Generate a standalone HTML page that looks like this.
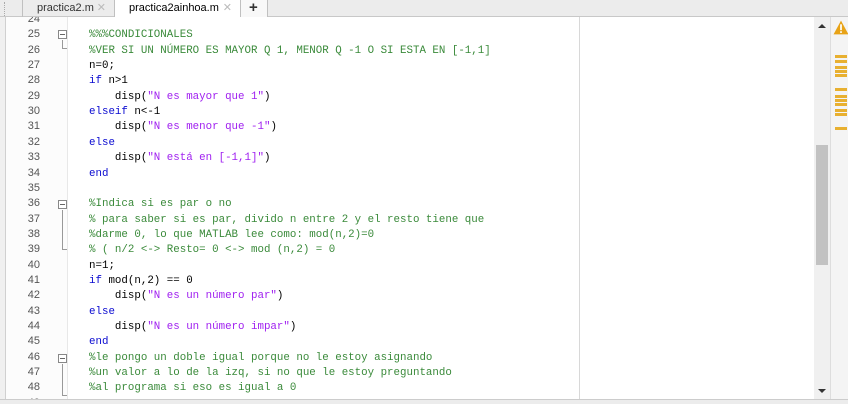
<!DOCTYPE html>
<html><head><meta charset="utf-8"><style>
*{margin:0;padding:0;box-sizing:border-box}
body{width:848px;height:404px;overflow:hidden;background:#f0f0f0;font-family:"Liberation Sans",sans-serif;position:relative}
.tabbar{position:absolute;left:0;top:0;width:848px;height:17px;background:#ececec;border-bottom:1px solid #c8c8c8}
.tab{position:absolute;top:0;height:17px;font-size:11px;line-height:16px;color:#333;padding-left:14px;border-right:1px solid #c0c0c0}
.tab .x{position:absolute;right:8px;color:#bbb;font-size:11px}
.ed{position:absolute;left:5px;top:17px;width:809px;height:382px;background:#fff;border-left:1px solid #d0d0d0;overflow:hidden}
.gut{position:absolute;left:0;top:0;width:62px;height:382px;background:#fcfcfc;border-right:1px solid #e8e8e8}
.ln{position:absolute;left:0;width:34px;text-align:right;font-family:"Liberation Sans",sans-serif;font-size:11px;color:#555}
.code{position:absolute;left:83px;font-family:"Liberation Mono",monospace;font-size:10.8px;white-space:pre;color:#000}
.c{color:#3a8a3a}.k{color:#0a0ad0}.s{color:#a020f0}
.fold{position:absolute;left:52px;width:9px;height:9px;border:1px solid #888;background:#fff}
.fold:after{content:"";position:absolute;left:1px;top:3px;width:5px;height:1px;background:#666}
.fl{position:absolute;left:56px;width:5px;border-left:1px solid #999;border-bottom:1px solid #999}
.margin{position:absolute;left:573px;top:0;width:1px;height:382px;background:#d8d8d8}
.sb{position:absolute;left:814px;top:17px;width:16px;height:382px;background:#f0f0f0}
.thumb{position:absolute;left:2px;top:128px;width:12px;height:120px;background:#c2c2c2}
.rp{position:absolute;left:830px;top:17px;width:18px;height:382px;background:#f4f4f4;border-left:1px solid #ddd}
.m{position:absolute;left:4px;width:12px;height:3px;background:#e8b030}
</style></head><body>
<div class="tabbar">
<div style="position:absolute;left:4px;top:2px;width:8px;height:14px;border-left:1px dotted #aaa"></div>
<div class="tab" style="left:22px;width:93px;border-left:1px solid #c0c0c0">practica2.m<span class="x">✕</span></div>
<div class="tab" style="left:115px;width:126px;background:#fff;height:18px;color:#000">practica2ainhoa.m<span class="x">✕</span></div>
<div class="tab" style="left:241px;width:27px;padding-left:8px;font-size:15px;font-weight:bold;line-height:15px;background:#f8f8f8">+</div>
</div>
<div class="ed">
<div class="gut"></div>
<div class="margin"></div>
<div id="lines"></div>
<div class="fold" style="top:13px"></div><div class="fl" style="top:23px;height:9px"></div>
<div class="fold" style="top:183px"></div><div class="fl" style="top:193px;height:40px"></div>
<div class="fold" style="top:337px"></div><div class="fl" style="top:347px;height:32px"></div>
</div>
<div class="sb"><div style="position:absolute;left:4px;top:7px;border:4px solid transparent;border-bottom:4px solid #333;border-top:0"></div><div class="thumb"></div><div style="position:absolute;left:4px;top:372px;border:4px solid transparent;border-top:4px solid #333;border-bottom:0"></div></div>
<div class="rp">
<svg style="position:absolute;left:2px;top:3px" width="16" height="15" viewBox="0 0 15 14"><path d="M7.5 0.5L14.5 13.5H0.5Z" fill="#e8a317"/><rect x="6.7" y="4" width="1.6" height="5.5" fill="#fff"/><rect x="6.7" y="10.5" width="1.6" height="1.6" fill="#fff"/></svg>
<div class="m" style="top:38px"></div><div class="m" style="top:43px"></div>
<div class="m" style="top:49px"></div><div class="m" style="top:53px"></div><div class="m" style="top:57px"></div>
<div class="m" style="top:71px"></div>
<div class="m" style="top:78px"></div><div class="m" style="top:82px"></div><div class="m" style="top:86px"></div>
<div class="m" style="top:92px"></div><div class="m" style="top:96px"></div>
<div class="m" style="top:110px"></div>
</div>
<div style="position:absolute;left:0;top:399px;width:848px;height:5px;background:#ececec;border-top:1px solid #ccc"></div>
<script>
var L=[
[24,''],
[25,'<span class="c">%%%CONDICIONALES</span>'],
[26,'<span class="c">%VER SI UN NÚMERO ES MAYOR Q 1, MENOR Q -1 O SI ESTA EN [-1,1]</span>'],
[27,'n=0;'],
[28,'<span class="k">if</span> n&gt;1'],
[29,'    disp(<span class="s">"N es mayor que 1"</span>)'],
[30,'<span class="k">elseif</span> n&lt;-1'],
[31,'    disp(<span class="s">"N es menor que -1"</span>)'],
[32,'<span class="k">else</span>'],
[33,'    disp(<span class="s">"N está en [-1,1]"</span>)'],
[34,'<span class="k">end</span>'],
[35,''],
[36,'<span class="c">%Indica si es par o no</span>'],
[37,'<span class="c">% para saber si es par, divido n entre 2 y el resto tiene que</span>'],
[38,'<span class="c">%darme 0, lo que MATLAB lee como: mod(n,2)=0</span>'],
[39,'<span class="c">% ( n/2 &lt;-&gt; Resto= 0 &lt;-&gt; mod (n,2) = 0</span>'],
[40,'n=1;'],
[41,'<span class="k">if</span> mod(n,2) == 0'],
[42,'    disp(<span class="s">"N es un número par"</span>)'],
[43,'<span class="k">else</span>'],
[44,'    disp(<span class="s">"N es un número impar"</span>)'],
[45,'<span class="k">end</span>'],
[46,'<span class="c">%le pongo un doble igual porque no le estoy asignando</span>'],
[47,'<span class="c">%un valor a lo de la izq, si no que le estoy preguntando</span>'],
[48,'<span class="c">%al programa si eso es igual a 0</span>'],
[49,'']];
var h='';
L.forEach(function(l,i){var y=-4+i*15.35;
h+='<div class="ln" style="top:'+y+'px">'+l[0]+'</div><div class="code" style="top:'+(y+1)+'px">'+l[1]+'</div>';});
document.getElementById('lines').innerHTML=h;
</script>
</body></html>
